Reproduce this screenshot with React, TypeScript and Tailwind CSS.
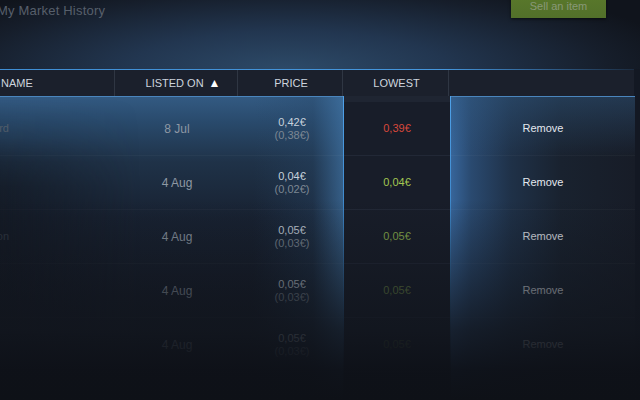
import React from "react";

type Row = {
  name: string;
  date: string;
  price: string;
  net: string;
  low: string;
  lowColor: string;
};

const rows: Row[] = [
  { name: "Trading Card", date: "8 Jul", price: "0,42€", net: "(0,38€)", low: "0,39€", lowColor: "text-[#d9483b]" },
  { name: "", date: "4 Aug", price: "0,04€", net: "(0,02€)", low: "0,04€", lowColor: "text-[#a3c651]" },
  { name: "Emoticon", date: "4 Aug", price: "0,05€", net: "(0,03€)", low: "0,05€", lowColor: "text-[#8cb14c]" },
  { name: "", date: "4 Aug", price: "0,05€", net: "(0,03€)", low: "0,05€", lowColor: "text-[#6f8a45]" },
  { name: "", date: "4 Aug", price: "0,05€", net: "(0,03€)", low: "0,05€", lowColor: "text-[#55693a]" },
];

export default function App() {
  return (
    <div
      className="relative w-[640px] h-[400px] overflow-hidden bg-[#131823] text-[11px]"
      style={{ fontFamily: '"Liberation Sans", Arial, sans-serif' }}
    >
      {/* top area */}
      <div className="relative h-[69px] bg-[radial-gradient(ellipse_400px_95px_at_45%_100%,#2d4a68_0%,#223650_40%,#161e2b_80%,#10141c_100%)]">
        <div className="flex items-start justify-between">
          <div className="ml-[-3px] mt-[1px] text-[13px] text-[#575f6b] tracking-[0.2px]">My Market History</div>
          <div className="mr-[34px] mt-[-7px] h-[25px] w-[95px] bg-[linear-gradient(to_bottom,#5a792b,#52702a)] flex items-end justify-center pb-[4px] text-[11px] text-[#899878] shadow-[0_1px_3px_rgba(0,0,0,0.6)]">
            Sell an item
          </div>
        </div>
      </div>

      {/* header top blue line */}
      <div className="h-px w-[634px] bg-[linear-gradient(to_right,#3f8ed4_0%,#4596dc_70%,#2f5f8e_86%,#1c2c40_100%)]" />

      {/* header */}
      <div className="flex h-[26px] w-[634px] bg-[#1b202c] text-[#cdd5de] text-[11px]">
        <div className="w-[115px] flex items-center pl-[1px] border-r border-[#2f3643]">NAME</div>
        <div className="w-[123px] flex items-center justify-center pl-[14px] border-r border-[#2f3643]">
          LISTED ON <span className="ml-[5px] text-[12px] leading-none text-white">▲</span>
        </div>
        <div className="w-[105px] flex items-center justify-center pl-[2px] border-r border-[#2f3643]">PRICE</div>
        <div className="w-[106px] flex items-center justify-center pl-[2px] border-r border-[#2f3643]">LOWEST</div>
        <div className="flex-1" />
      </div>

      {/* body */}
      <div className="flex h-[304px]">
        {/* left panel */}
        <div className="relative w-[343px] border-t border-[#4a85bd] bg-[linear-gradient(to_left,rgba(62,112,160,0.75)_0px,rgba(40,72,106,0.35)_30px,rgba(0,0,0,0)_90px),linear-gradient(to_bottom,#335a82_0px,#294a6c_25px,#1f3248_65px,#182232_120px,#151b27_200px,#141923_260px)] pt-[5px]">
          {rows.map((r, i) => (
            <div key={i} className="relative grid grid-cols-[116px_122px_105px] h-[54px] border-b border-[#ffffff08]">
              <div className="flex items-center justify-end pr-[107px] whitespace-nowrap text-[11px] text-[#5a6573]">{r.name}</div>
              <div className="flex items-center justify-center text-[12px] text-[#8e98a4]">{r.date}</div>
              <div className="flex flex-col items-center justify-center leading-[13px] pl-[3px]">
                <span className="text-[#c7d1dc]">{r.price}</span>
                <span className="text-[#7c8793]">{r.net}</span>
              </div>
            </div>
          ))}
          {/* left vignette */}
          <div className="pointer-events-none absolute inset-y-0 left-0 w-[140px] bg-[linear-gradient(to_bottom,rgba(17,21,29,0)_0px,rgba(17,21,29,0.15)_40px,rgba(17,21,29,0.6)_90px)] [mask-image:linear-gradient(to_right,black,transparent)]" />
        </div>

        {/* blue divider */}
        <div className="w-px bg-[linear-gradient(to_bottom,#4fa2ea_0%,#3d86c8_40%,#2c5a88_75%,#1a2535_100%)]" />

        {/* lowest column */}
        <div className="w-[106px] bg-[#181d29]">
          <div className="h-[6px] bg-[#1f2532]" />
          {rows.map((r, i) => (
            <div key={i} className={`h-[54px] flex items-center justify-center border-b border-[#222836] ${r.lowColor}`}>
              {r.low}
            </div>
          ))}
        </div>

        {/* blue divider */}
        <div className="w-px bg-[linear-gradient(to_bottom,#4fa2ea_0%,#3d86c8_40%,#2c5a88_75%,#1a2535_100%)]" />

        {/* right panel */}
        <div className="w-[184px] border-t border-[#4a85bd] bg-[linear-gradient(to_bottom,rgba(50,90,130,0.45)_0px,rgba(0,0,0,0)_60px),linear-gradient(to_right,#37659a_0px,#2a4a70_20px,#1f3148_60px,#19222f_110px,#171c27_184px)] pt-[5px]">
          {rows.map((_, i) => (
            <div key={i} className="h-[54px] flex items-center justify-center text-[#e3e8ee] border-b border-[#ffffff08]">
              Remove
            </div>
          ))}
        </div>
        <div className="flex-1" />
      </div>

      {/* bottom fade */}
      <div className="pointer-events-none absolute inset-x-0 bottom-0 h-[200px] bg-[linear-gradient(to_bottom,rgba(17,21,29,0)_0%,rgba(17,21,29,0.45)_35%,rgba(17,21,29,0.85)_65%,rgba(14,17,24,0.97)_85%,#0e1117_100%)]" />
    </div>
  );
}
